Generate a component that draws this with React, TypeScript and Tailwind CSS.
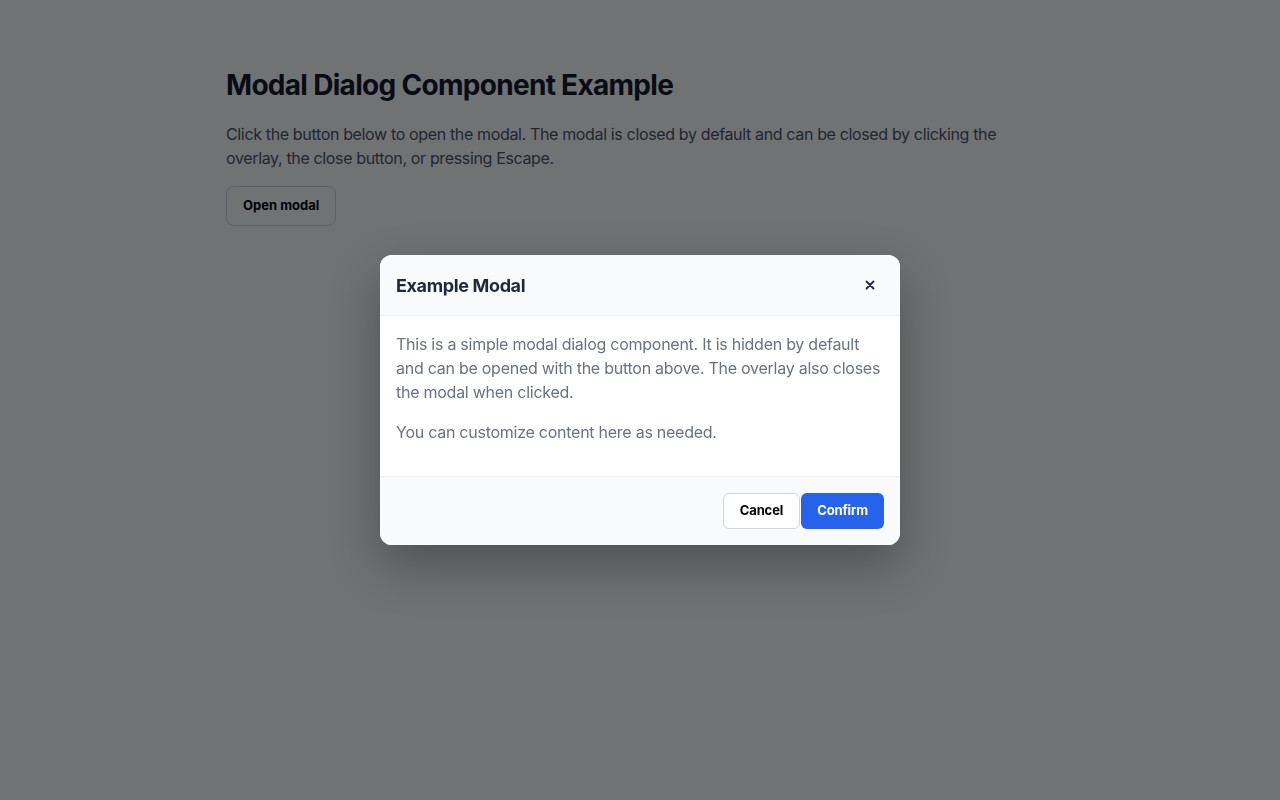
import { useEffect, useState } from "react";

const Modal = ({ open, onClose }: { open: boolean; onClose: () => void }) => {
    // Escape closes the dialog
    useEffect(() => {
        const onKey = (e: KeyboardEvent) => {
            if (e.key === "Escape") onClose();
        };
        window.addEventListener("keydown", onKey);
        return () => window.removeEventListener("keydown", onKey);
    }, [onClose]);

    if (!open) return null;

    return (
        <div
            className="fixed inset-0 z-50 flex items-center justify-center bg-[rgba(2,3,8,0.56)]"
            onClick={onClose}
        >
            <div
                role="dialog"
                aria-modal="true"
                className="w-[520px] overflow-hidden rounded-xl bg-white shadow-[0_20px_50px_rgba(0,0,0,0.3)]"
                onClick={(e) => e.stopPropagation()}
            >
                <div className="flex h-[61px] items-center justify-between border-b border-[#eef1f5] bg-[#f8fafc] px-4">
                    <h2 className="text-[18px] font-bold tracking-[-0.02em] text-[#1f2937]">Example Modal</h2>
                    <button
                        aria-label="Close"
                        className="flex h-7 w-7 items-center justify-center rounded-md text-[#1f2937]"
                        onClick={onClose}
                    >
                        <svg width="10" height="10" viewBox="0 0 10 10" fill="none">
                            <path d="M1.5 1.5l7 7M8.5 1.5l-7 7" stroke="currentColor" strokeWidth="1.8" strokeLinecap="round" />
                        </svg>
                    </button>
                </div>

                <div className="px-4 pb-8 pt-4 text-[16px] leading-6 tracking-[-0.016em] text-[#6b7280]">
                    <p>
                        This is a simple modal dialog component. It is hidden by default and can be opened with the
                        button above. The overlay also closes the modal when clicked.
                    </p>
                    <p className="mt-4">You can customize content here as needed.</p>
                </div>

                <div className="flex justify-end gap-px border-t border-[#eef1f5] bg-[#f8fafc] p-4">
                    <button
                        className="h-9 rounded-md border border-[#d1d5db] bg-white px-4 text-[13px] font-bold tracking-[-0.01em] text-black"
                        onClick={onClose}
                    >
                        Cancel
                    </button>
                    <button
                        className="h-9 rounded-md bg-[#2563eb] px-4 text-[13px] font-bold tracking-[-0.01em] text-white"
                        onClick={onClose}
                    >
                        Confirm
                    </button>
                </div>
            </div>
        </div>
    );
};

export default function App() {
    const [open, setOpen] = useState(true);

    return (
        <div className="min-h-screen bg-white font-['Inter',sans-serif]">
            <main className="mx-auto w-[828px] pt-[67px]">
                <h1 className="text-[28px] font-bold leading-9 tracking-[-0.025em] text-[#111827]">
                    Modal Dialog Component Example
                </h1>
                <p className="mt-[19px] text-[16px] leading-6 tracking-[-0.022em] text-[#4b5563]">
                    Click the button below to open the modal. The modal is closed by default and can be closed by
                    clicking the overlay, the close button, or pressing Escape.
                </p>
                <button
                    className="mt-4 h-10 rounded-lg border border-[#d1d5db] bg-white px-4 text-[13px] font-bold text-black"
                    onClick={() => setOpen(true)}
                >
                    Open modal
                </button>
            </main>
            <Modal open={open} onClose={() => setOpen(false)} />
        </div>
    );
}
